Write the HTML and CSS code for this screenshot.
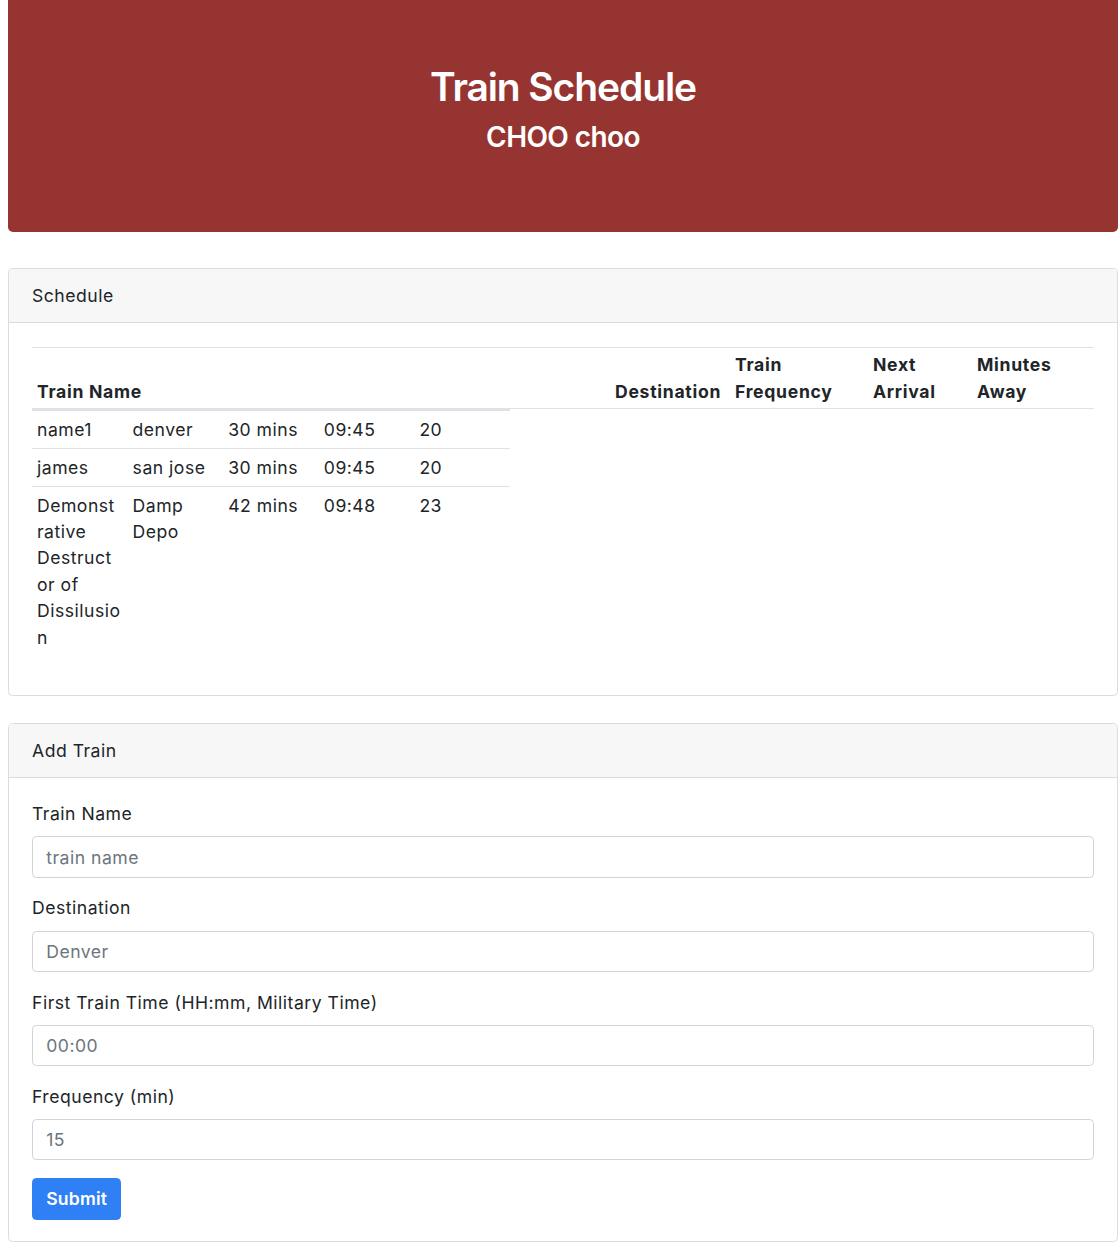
FILE: index.html
```html
<!DOCTYPE html>
<html lang="en">
<head>
<meta charset="utf-8">
<title>Train Schedule</title>
<link rel="stylesheet" href="styles.css">
</head>
<body>
<div class="container">
  <header class="jumbotron">
    <h1 class="title">Train Schedule</h1>
    <h3 class="subtitle">CHOO choo</h3>
  </header>

  <section class="card schedule-card">
    <div class="card-header">Schedule</div>
    <div class="card-body">
      <table class="sched-head">
        <colgroup>
          <col class="c-name"><col class="c-dest"><col class="c-freq"><col class="c-next"><col class="c-min">
        </colgroup>
        <thead>
          <tr>
            <th>Train Name</th>
            <th>Destination</th>
            <th>Train Frequency</th>
            <th>Next Arrival</th>
            <th>Minutes Away</th>
          </tr>
        </thead>
      </table>
      <table class="sched-body">
        <tbody>
          <tr><td>name1</td><td>denver</td><td>30 mins</td><td>09:45</td><td>20</td></tr>
          <tr><td>james</td><td>san jose</td><td>30 mins</td><td>09:45</td><td>20</td></tr>
          <tr><td>Demonst<wbr>rative Destruct<wbr>or of Dissilusio<wbr>n</td><td>Damp Depo</td><td>42 mins</td><td>09:48</td><td>23</td></tr>
        </tbody>
      </table>
    </div>
  </section>

  <section class="card add-card">
    <div class="card-header">Add Train</div>
    <div class="card-body form-body">
      <form class="train-form">
        <div class="form-group">
          <label for="name">Train Name</label>
          <input id="name" class="form-control" type="text" placeholder="train name">
        </div>
        <div class="form-group">
          <label for="dest">Destination</label>
          <input id="dest" class="form-control" type="text" placeholder="Denver">
        </div>
        <div class="form-group">
          <label for="first">First Train Time (HH:mm, Military Time)</label>
          <input id="first" class="form-control" type="text" placeholder="00:00">
        </div>
        <div class="form-group">
          <label for="freq">Frequency (min)</label>
          <input id="freq" class="form-control" type="text" placeholder="15">
        </div>
        <button type="submit" class="btn-primary">Submit</button>
      </form>
    </div>
  </section>
</div>
</body>
</html>
```

FILE: styles.css
```css
html {
  font-size: 17.6px;
}

body {
  margin: 0;
  font-family: Inter, "Noto Sans", "Liberation Sans", sans-serif;
  font-size: 1rem;
  line-height: 1.5;
  letter-spacing: 0.5px;
  color: #212529;
  background: #fff;
}

.container {
  width: 1110px;
  margin: 0 0 0 8px;
}

.jumbotron {
  background: #963431;
  color: #fff;
  text-align: center;
  padding: 63px 2rem 68px;
  border-radius: 0 0 5px 5px;
  margin-bottom: 36px;
}

.title {
  margin: 0 0 9px;
  font-size: 39px;
  line-height: 48px;
  font-weight: 600;
  letter-spacing: -1.1px;
}

.subtitle {
  margin: 0 0 8.8px;
  font-size: 28px;
  line-height: 35px;
  font-weight: 600;
  letter-spacing: -0.6px;
}

.card {
  border: 1px solid #dcdcdc;
  border-radius: 4.4px;
  margin-bottom: 27px;
  overflow: hidden;
}

.card-header {
  background: #f7f7f7;
  border-bottom: 1px solid #dcdcdc;
  padding: 14px 23px 13px;
  line-height: 26.4px;
}

.card-body {
  padding: 23px;
}

.form-body {
  padding-bottom: 21px;
}

table {
  border-collapse: collapse;
}

.sched-head {
  width: 100%;
  table-layout: fixed;
  margin-top: 1px;
}

.c-name { width: 578px; }
.c-dest { width: 120px; }
.c-freq { width: 138px; }
.c-next { width: 104px; }
.c-min { width: 122px; }

.sched-head th {
  text-align: left;
  vertical-align: bottom;
  font-weight: 700;
  letter-spacing: 0.7px;
  padding: 4px 5px 3px;
  border-top: 1px solid #dee2e6;
  border-bottom: 1px solid #dee2e6;
}

.sched-body {
  width: 478px;
  table-layout: fixed;
  margin-bottom: 16px;
  border-top: 2px solid #dee2e6;
}

.sched-body td {
  vertical-align: top;
  padding: 5.6px 5px 5px;
  overflow-wrap: break-word;
  word-wrap: break-word;
  border-top: 1px solid #dee2e6;
}

.sched-body tr:first-child td {
  border-top: none;
}

.form-group {
  margin-bottom: 17.6px;
}

.form-group label {
  display: inline-block;
  margin-bottom: 8.8px;
}

.form-control {
  display: block;
  box-sizing: border-box;
  width: 100%;
  height: 41.4px;
  padding: 6px 13.2px;
  font-family: inherit;
  font-size: 1rem;
  line-height: 1.5;
  letter-spacing: 0.5px;
  color: #495057;
  background: #fff;
  border: 1px solid #ced4da;
  border-radius: 4.4px;
  margin: 0;
}

.form-control::placeholder {
  color: #6c757d;
  opacity: 1;
}

.btn-primary {
  display: inline-block;
  font-family: inherit;
  font-size: 1rem;
  line-height: 1.5;
  font-weight: 600;
  letter-spacing: 0.2px;
  color: #fff;
  background: #2f7ff5;
  border: 1px solid #2f7ff5;
  border-radius: 4.4px;
  padding: 6.6px 13.2px;
  margin: 0;
  cursor: pointer;
}
```
